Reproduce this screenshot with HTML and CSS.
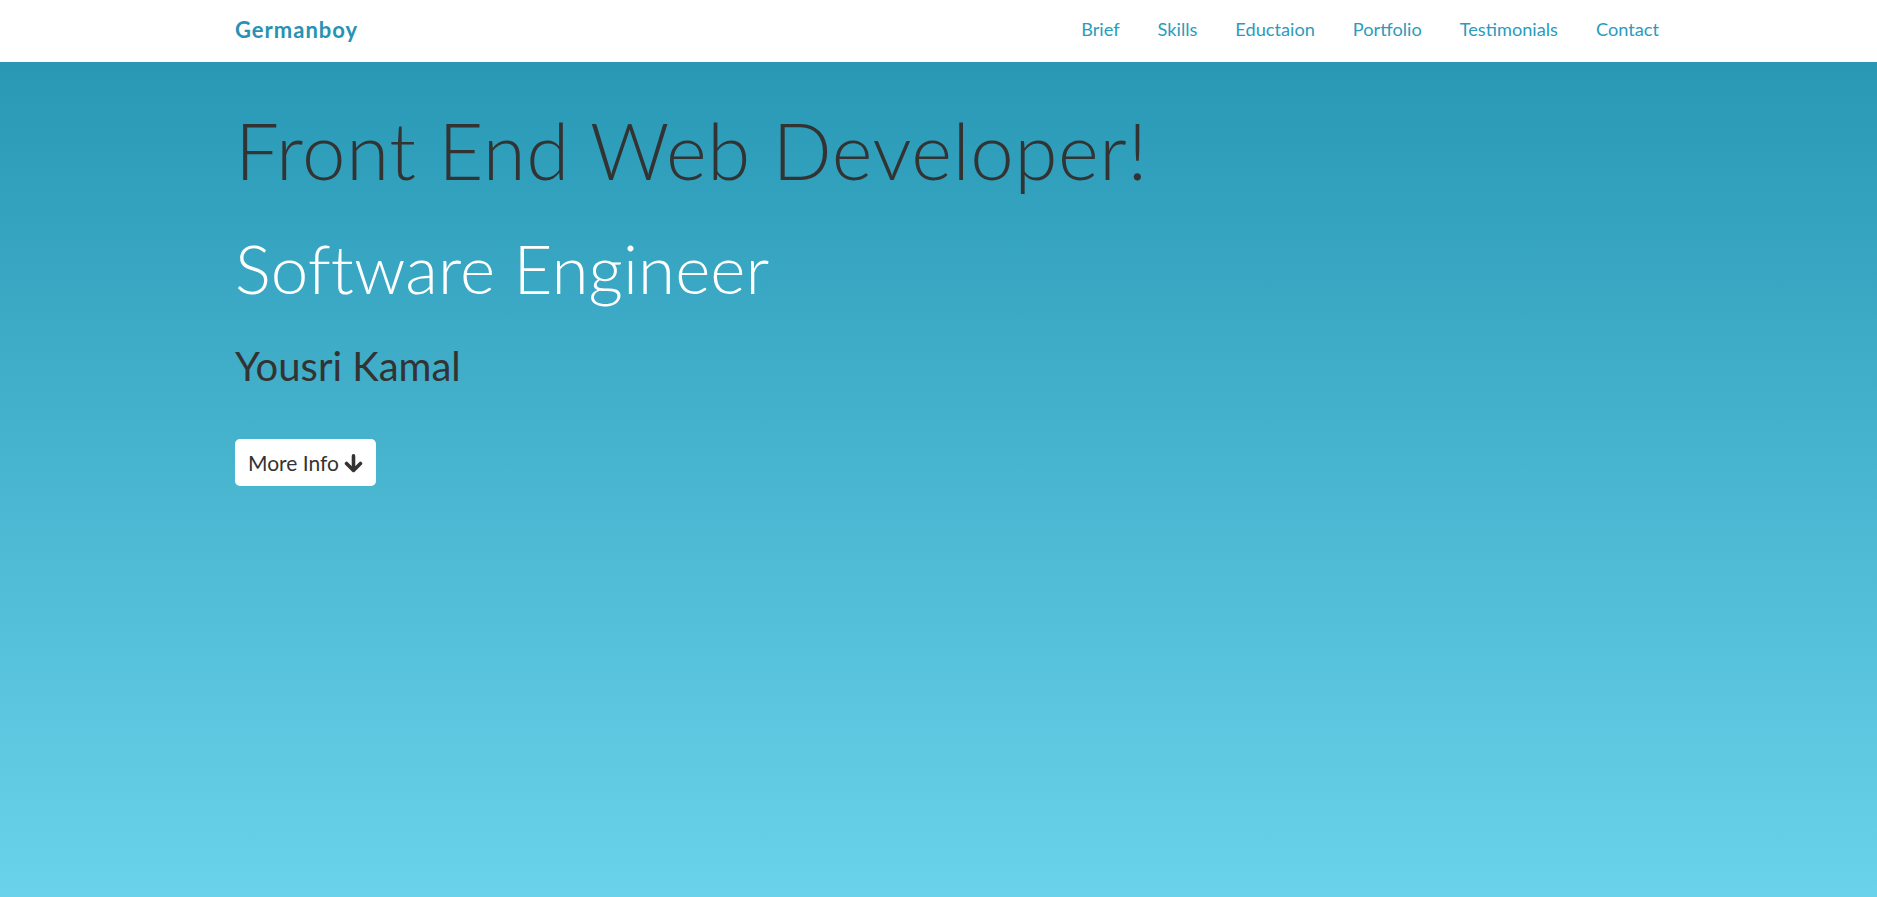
FILE: index.html
```html
<!DOCTYPE html>
<html lang="en">
<head>
<meta charset="utf-8">
<title>Germanboy</title>
<link rel="stylesheet" href="styles.css">
</head>
<body>
<header class="navbar">
  <div class="nav-inner">
    <a class="brand" href="#">Germanboy</a>
    <nav class="nav-links">
      <a href="#">Brief</a>
      <a href="#">Skills</a>
      <a href="#">Eductaion</a>
      <a href="#">Portfolio</a>
      <a href="#">Testimonials</a>
      <a href="#">Contact</a>
    </nav>
  </div>
</header>
<main class="hero">
  <div class="hero-inner">
    <h1 class="title">Front End Web Developer!</h1>
    <h2 class="subtitle">Software Engineer</h2>
    <h3 class="name">Yousri Kamal</h3>
    <a class="btn-more" href="#">More Info
      <svg class="arrow" viewBox="0 0 18 18" width="19" height="19" aria-hidden="true"><path d="M9 1.8V15.6M2.4 9L9 15.6L15.6 9" fill="none" stroke="#333" stroke-width="3.4" stroke-linecap="round" stroke-linejoin="round"/></svg>
    </a>
  </div>
</main>
</body>
</html>
```
FILE: styles.css
```css
* { box-sizing: border-box; }
html, body { margin: 0; padding: 0; height: 100%; }
body {
  font-family: "Lato", "Open Sans", sans-serif;
  color: #333;
  background: #6ad3eb;
  display: flex;
  flex-direction: column;
}
a { text-decoration: none; }

.navbar {
  background: #fff;
  height: 62px;
  flex: none;
}
.nav-inner {
  height: 100%;
  display: flex;
  align-items: center;
  justify-content: space-between;
  padding: 0 218px 4px 235px;
}
.brand {
  color: #2792b2;
  font-size: 22px;
  font-weight: 700;
  letter-spacing: 1px;
}
.nav-links {
  display: flex;
  gap: 38px;
}
.nav-links a {
  color: #2b9bbd;
  font-size: 18.2px;
  font-weight: 400;
}

.hero {
  flex: 1;
  background: linear-gradient(180deg, #2898b5 0%, #6ad3eb 100%);
}
.hero-inner {
  padding: 42px 218px 0 235px;
  display: flex;
  flex-direction: column;
  align-items: flex-start;
}
.title {
  margin: 0;
  font-size: 78px;
  font-weight: 300;
  line-height: 1.2;
  letter-spacing: 0.6px;
  color: #333;
}
.subtitle {
  margin: 30px 0 0;
  font-size: 67.3px;
  font-weight: 300;
  line-height: 1.2;
  letter-spacing: 0.1px;
  color: #fff;
}
.name {
  margin: 34px 0 0;
  font-size: 40px;
  font-weight: 400;
  line-height: 1.2;
  color: #333;
}
.btn-more {
  margin-top: 49px;
  display: inline-flex;
  align-items: center;
  gap: 5px;
  background: #fff;
  color: #333;
  font-size: 21px;
  line-height: 1.5;
  padding: 7.75px 13px;
  border-radius: 5px;
}
.arrow { margin-top: 2px; }
```
